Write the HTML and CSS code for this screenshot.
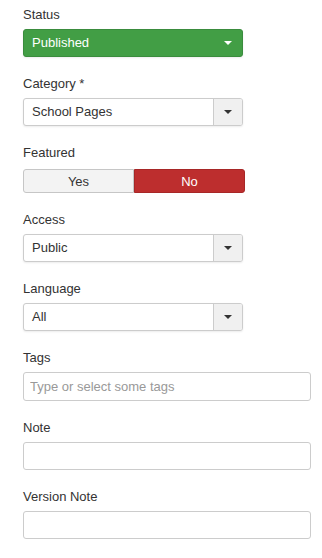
FILE: index.html
```html
<!DOCTYPE html>
<html lang="en">
<head>
    <meta charset="UTF-8">
    <meta name="viewport" content="width=device-width, initial-scale=1.0">
    <title>Article options</title>
    <link rel="stylesheet" href="styles.css">
</head>
<body>
    <form class="form-vertical">
        <div class="control-group">
            <label class="control-label">Status</label>
            <div class="select select-success">
                <span class="select-value">Published</span>
                <span class="select-arrow"><b class="caret"></b></span>
            </div>
        </div>
        <div class="control-group">
            <label class="control-label">Category *</label>
            <div class="select">
                <span class="select-value">School Pages</span>
                <span class="select-arrow"><b class="caret"></b></span>
            </div>
        </div>
        <div class="control-group">
            <label class="control-label">Featured</label>
            <div class="btn-group">
                <span class="btn">Yes</span>
                <span class="btn btn-danger">No</span>
            </div>
        </div>
        <div class="control-group">
            <label class="control-label">Access</label>
            <div class="select">
                <span class="select-value">Public</span>
                <span class="select-arrow"><b class="caret"></b></span>
            </div>
        </div>
        <div class="control-group">
            <label class="control-label">Language</label>
            <div class="select">
                <span class="select-value">All</span>
                <span class="select-arrow"><b class="caret"></b></span>
            </div>
        </div>
        <div class="control-group">
            <label class="control-label">Tags</label>
            <input class="input input-tags" type="text" placeholder="Type or select some tags">
        </div>
        <div class="control-group">
            <label class="control-label">Note</label>
            <input class="input" type="text">
        </div>
        <div class="control-group">
            <label class="control-label">Version Note</label>
            <input class="input" type="text">
        </div>
    </form>
</body>
</html>
```

FILE: styles.css
```css
* { margin: 0; padding: 0; box-sizing: border-box; }
body {
    font-family: "Liberation Sans", Arial, sans-serif;
    font-size: 13px;
    line-height: 18px;
    color: #333;
    background: #fff;
}
.form-vertical { padding: 6px 0 0 23px; }
.control-group { margin-bottom: 18px; }
.control-label { display: block; padding-bottom: 5px; }

.select {
    display: flex;
    width: 220px;
    height: 28px;
    border: 1px solid #ccc;
    border-radius: 3px;
    background: #fff;
    box-shadow: 0 1px 2px rgba(0,0,0,0.08);
}
.select-value { flex: 1; padding: 4px 8px; }
.select-arrow {
    width: 29px;
    display: flex;
    align-items: center;
    justify-content: center;
    background: #f0f0f0;
    border-left: 1px solid #ccc;
    border-radius: 0 2px 2px 0;
}
.caret {
    width: 0;
    height: 0;
    border-top: 4px solid #333;
    border-left: 4px solid transparent;
    border-right: 4px solid transparent;
}
.select-success { background: #429e45; border-color: #3a8c3d; color: #fff; }
.select-success .select-arrow { background: transparent; border-left: none; }
.select-success .caret { border-top-color: #fff; }

.btn-group { display: flex; width: 222px; height: 24px; margin-top: 2px; }
.btn {
    flex: 1;
    text-align: center;
    padding: 3px 0;
    background: #f3f3f3;
    border: 1px solid #c6c6c6;
    border-radius: 3px 0 0 3px;
    color: #333;
}
.btn-danger {
    background: #bd2e2e;
    border-color: #a72727;
    border-radius: 0 3px 3px 0;
    color: #fff;
}

.input {
    display: block;
    width: 288px;
    height: 28px;
    padding: 4px 6px;
    border: 1px solid #ccc;
    border-radius: 3px;
    font: inherit;
    color: #555;
    background: #fff;
}
.input-tags { height: 29px; }
.input::placeholder { color: #999; }
```
